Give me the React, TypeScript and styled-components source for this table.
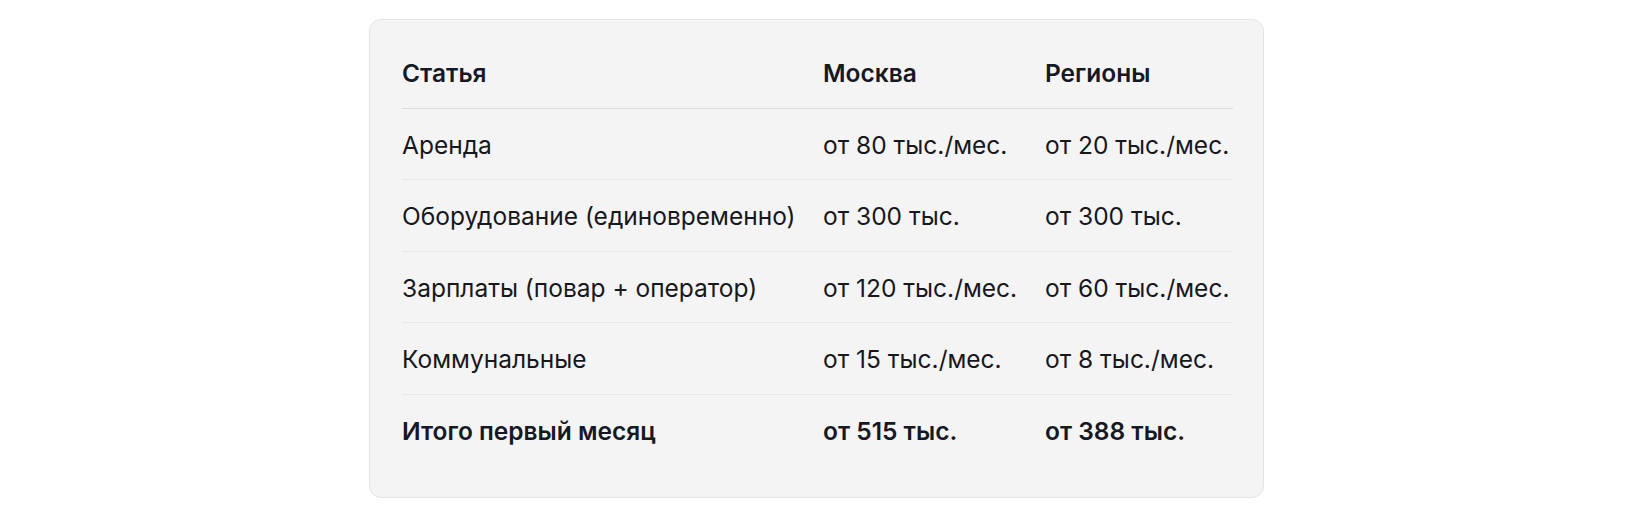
import styled, { createGlobalStyle } from "styled-components";

const GlobalStyle = createGlobalStyle`
  * {
    box-sizing: border-box;
  }

  body {
    margin: 0;
    background: #ffffff;
    font-family: Inter, "Noto Sans", "Liberation Sans", sans-serif;
    color: #15171f;
  }
`;

const Page = styled.div`
  padding: 19px 17px 20px 0;
`;

const Card = styled.div`
  width: 895px;
  margin: 0 auto;
  padding: 17px 32px 32px;
  background: #f4f4f5;
  border: 1px solid #e4e4e7;
  border-radius: 12px;
`;

const Table = styled.table`
  width: 100%;
  border-collapse: collapse;
  table-layout: fixed;
  font-size: 24.5px;
  line-height: 34.5px;
`;

const Col = styled.col<{ $width: number }>`
  width: ${(p) => p.$width}px;
`;

const HeadCell = styled.th`
  padding: 19px 0 17px;
  text-align: left;
  font-weight: 600;
  color: #161823;
  border-bottom: 1px solid #dcdcde;
`;

const Row = styled.tr`
  border-bottom: 1px solid #e7e7e9;

  &:last-child {
    border-bottom: none;
  }
`;

const Cell = styled.td<{ $bold?: boolean }>`
  padding: 19px 0 17px;
  white-space: nowrap;
  font-weight: ${(p) => (p.$bold ? 600 : 400)};
  color: ${(p) => (p.$bold ? "#161823" : "#17171c")};
`;

interface CostRow {
  item: string;
  moscow: string;
  regions: string;
  total?: boolean;
}

const rows: CostRow[] = [
  { item: "Аренда", moscow: "от 80 тыс./мес.", regions: "от 20 тыс./мес." },
  { item: "Оборудование (единовременно)", moscow: "от 300 тыс.", regions: "от 300 тыс." },
  { item: "Зарплаты (повар + оператор)", moscow: "от 120 тыс./мес.", regions: "от 60 тыс./мес." },
  { item: "Коммунальные", moscow: "от 15 тыс./мес.", regions: "от 8 тыс./мес." },
  { item: "Итого первый месяц", moscow: "от 515 тыс.", regions: "от 388 тыс.", total: true },
];

const App = () => {
  return (
    <Page>
      <GlobalStyle />
      <Card>
        <Table>
          <colgroup>
            <Col $width={421} />
            <Col $width={222} />
            <Col $width={188} />
          </colgroup>
          <thead>
            <tr>
              <HeadCell>Статья</HeadCell>
              <HeadCell>Москва</HeadCell>
              <HeadCell>Регионы</HeadCell>
            </tr>
          </thead>
          <tbody>
            {rows.map((row, i) => (
              <Row key={i}>
                <Cell $bold={row.total}>{row.item}</Cell>
                <Cell $bold={row.total}>{row.moscow}</Cell>
                <Cell $bold={row.total}>{row.regions}</Cell>
              </Row>
            ))}
          </tbody>
        </Table>
      </Card>
    </Page>
  );
};

export default App;
